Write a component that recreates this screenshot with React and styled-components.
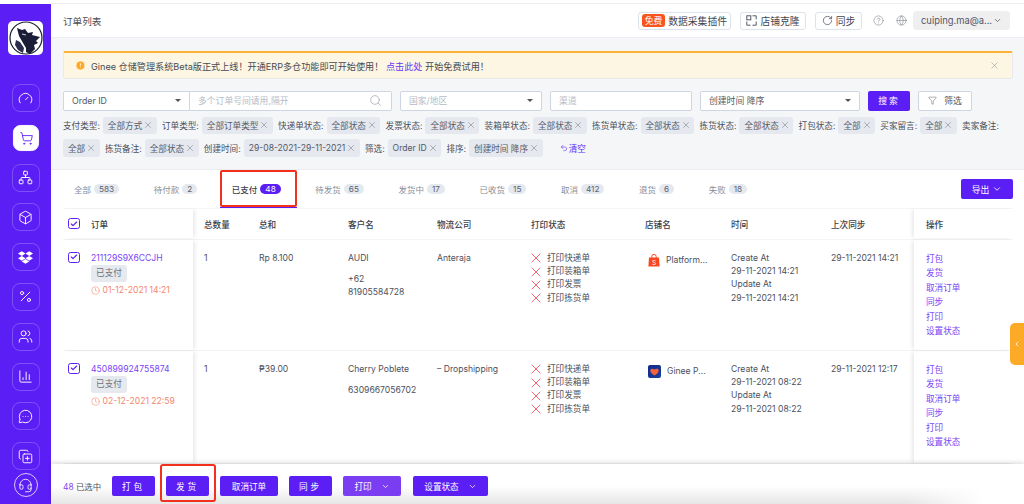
import React from "react";
import styled, { createGlobalStyle } from "styled-components";
import {
  Gauge, ShoppingCart, Network, Box, Percent, Users, ChartColumn, MessageCircleMore, CopyPlus, Headset,
  RotateCw, CircleHelp, Globe, ChevronDown, ChevronLeft, X, Search, Filter, Check, Clock, Undo2, CircleAlert,
} from "lucide-react";
import { FaDropbox } from "react-icons/fa";

const PURPLE = "#5b1ef5";
const LINK = "#7b45f6";
const TEXT = "#4b505c";

const Global = createGlobalStyle`
  html, body { margin: 0; padding: 0; background: #fff; }
  body { font-family: Inter, "Noto Sans CJK SC", "Liberation Sans", sans-serif; font-size: 8.6px; color: ${TEXT}; }
  * { box-sizing: border-box; }
`;

const Page = styled.div`
  width: 1024px; height: 504px; overflow: hidden; display: flex; padding-top: 4px; position: relative;
`;
const Sidebar = styled.aside`
  width: 51px; flex: none; background: ${PURPLE}; display: flex; flex-direction: column; align-items: center; padding-top: 17px;
`;
const Logo = styled.div`
  width: 35px; height: 34px; background: #fff; border-radius: 5px; display: flex; align-items: center; justify-content: center; margin-bottom: 29px;
`;
const NavList = styled.div`
  display: flex; flex-direction: column; gap: 11.8px; align-items: center;
`;
const NavItem = styled.div`
  width: 28px; height: 28px; border-radius: 8px;
  display: flex; align-items: center; justify-content: center;
  border: 1px solid ${(p) => (p.$active ? "#fff" : "rgba(255,255,255,.22)")};
  background: ${(p) => (p.$active ? "#fff" : "transparent")};
  color: ${(p) => (p.$active ? PURPLE : "#fff")};
  ${(p) => p.$active && "transform: scale(.93);"}
`;
const Support = styled.div`
  width: 24px; height: 24px; border-radius: 50%; border: 1px solid rgba(255,255,255,.75); color: #fff;
  display: flex; align-items: center; justify-content: center; margin-top: 3px;
`;
const Main = styled.main`
  flex: 1; min-width: 0; display: flex; flex-direction: column; border-top: 1px solid #ededed; margin-top: -1px;
`;
const Header = styled.header`
  height: 34px; flex: none; display: flex; align-items: center; padding: 0 14px 0 12px; border-bottom: 1px solid #eceef2; background: #fff;
`;
const Title = styled.h1`
  margin: 0; margin-right: auto; font-size: 9.6px; font-weight: 400; color: #4a4f59;
`;
const HeaderBtn = styled.button`
  width: ${(p) => p.$w}px; height: 18px; padding: 0; margin-left: ${(p) => p.$ml ?? 9}px;
  background: #fff; border: 1px solid #dde3ec; border-radius: 3px; color: #3f4450;
  font: inherit; font-size: 9.8px; display: flex; align-items: center; justify-content: center; gap: 3px; white-space: nowrap;
`;
const FreeBadge = styled.span`
  background: #f9531e; color: #fff; font-size: 8.8px; height: 13px; line-height: 13px; padding: 0 2.800px; border-radius: 3px;
`;
const HeaderIcon = styled.span`
  display: flex; color: #777c86; margin-left: ${(p) => p.$ml}px;
`;
const UserPill = styled.div`
  width: 97px; height: 19px; margin-left: 6px; border-radius: 4px; background: #efefef; color: #50566b; font-size: 9.4px;
  display: flex; align-items: center; padding-left: 8px; gap: 1px; white-space: nowrap;
`;
const FilterArea = styled.section`
  height: 132px; flex: none; background: #f5f6f8; padding: 13px 11px 0 12px; border-bottom: 1px solid #eaecef;
`;
const Alert = styled.div`
  height: 28px; background: #fdf6e3; border-top: 2px solid #fdb135; border-bottom: 1px solid #e8e9ea; border-left: 1px solid #eceae4; border-right: 1px solid #e8e9ea;
  border-radius: 2px; display: flex; align-items: center; padding: 0 12px 0 11px; font-size: 9.15px; color: #474a52; gap: 5px;
`;
const AlertLink = styled.a`color: #6a36f5;`;
const AlertClose = styled.span`margin-left: auto; display: flex; color: #8b8f97;`;
const SearchRow = styled.div`
  display: flex; height: 20px; margin-top: 11.5px;
`;
const Field = styled.div`
  width: ${(p) => p.$w}px; margin-right: ${(p) => p.$mr ?? 8}px; height: 20px; background: #fff;
  border: 1px solid #cfd6e3; border-radius: ${(p) => p.$radius || "2px"}; ${(p) => p.$noLeft && "border-left: 0;"}
  display: flex; align-items: center; justify-content: space-between; padding: 0 ${(p) => p.$pr ?? 8}px 0 8px;
  font-size: 8.8px; color: ${(p) => (p.$ph ? "#b6bbc6" : "#555a65")};
`;
const Caret = styled.span`
  width: 0; height: 0; border-left: 3px solid transparent; border-right: 3px solid transparent; border-top: 3px solid #555;
`;
const SearchBtn = styled.button`
  width: 42px; height: 20px; border: 0; background: ${PURPLE}; color: #fff; border-radius: 2px; font: inherit; font-size: 8.8px; letter-spacing: 2px; margin-right: 8px;
`;
const FilterBtn = styled.button`
  width: 54px; height: 20px; border: 1px solid #cfd6e3; background: #fff; border-radius: 2px; font: inherit; font-size: 8.8px; color: #555a65;
  display: flex; align-items: center; justify-content: center; gap: 7px;
`;
const TagRows = styled.div`
  display: flex; flex-wrap: wrap; align-items: center; column-gap: 3px; row-gap: 5px; margin-top: 6px;
`;
const TagLabel = styled.span`color: #4a4f5a; white-space: nowrap;`;
const Tag = styled.span`
  height: 17.5px; padding: 0 3.500px 0 5px; margin-right: 2.200px; background: #e5e8ef; border-radius: 3px; display: inline-flex; align-items: center; gap: 1px; white-space: nowrap; color: #555a66;
`;
const Clear = styled.a`
  color: ${PURPLE}; margin-left: 12px; display: inline-flex; align-items: center; gap: 1px;
`;
const Tabs = styled.nav`
  height: 38px; flex: none; background: #fff; display: flex; gap: 34.6px; padding: 0 11px 0 23px; align-items: stretch;
  margin: 0; position: relative; font-size: 8.5px;
`;
const TabWrap = styled.div`
  display: flex; align-items: center; gap: 3px; position: relative; color: ${(p) => (p.$active ? "#3c4048" : "#898e98")}; white-space: nowrap;
  font-weight: ${(p) => (p.$active ? 500 : 400)};
`;
const Count = styled.span`
  height: 10px; padding: 0 5px; border-radius: 5px; font-size: 8.2px; line-height: 10px; text-align: center; font-weight: 400;
  background: ${(p) => (p.$active ? PURPLE : "#e4e8ef")}; color: ${(p) => (p.$active ? "#fff" : "#5c6270")};
`;
const Annotation = styled.div`
  position: absolute; border: 2px solid #f3301e; border-radius: 2px; pointer-events: none; z-index: 5;
`;
const TabMark = styled(Annotation)`
  left: -12px; right: -16px; top: 0; bottom: 1px;
`;
const Underline = styled.div`
  position: absolute; left: -12px; right: -16px; bottom: 0; height: 1px; background: ${PURPLE};
`;
const ExportBtn = styled.button`
  margin: 9px 0 9px auto; width: 52px; height: 20px; border: 0; border-radius: 2px; background: ${PURPLE}; color: #fff; font: inherit; font-size: 8.8px;
  display: flex; align-items: center; justify-content: center; gap: 3px;
`;
const TableWrap = styled.div`
  flex: 1; min-height: 0; background: #fff; padding: 0 11px 0 12px; overflow: hidden;
`;
const Row = styled.div`
  display: grid; grid-template-columns: 130px 55px 89px 89px 94px 114px 86px 100px 94px 99px;
  height: ${(p) => p.$h}px; border-bottom: 1px solid #f3f4f6; border-top: ${(p) => (p.$head ? "1px solid #f6f6f6" : 0)};
  ${(p) => p.$head && "padding-bottom: 1px;"}
`;
const Cell = styled.div`
  padding: ${(p) => (p.$head ? "0" : "11.5px")} 4px 0 11px; min-width: 0;
  ${(p) => p.$head && "display: flex; align-items: center; font-weight: 500; color: #3c4048;"}
`;
const OrderCell = styled(Cell)`
  display: flex; gap: 11.5px; padding-left: 5px; position: relative; z-index: 1; box-shadow: 3px 0 4px -1px rgba(0,0,0,.09);
  ${(p) => p.$head && "align-items: center;"}
`;
const ActionCell = styled(Cell)`
  padding-left: 12px; position: relative; z-index: 1; box-shadow: -3px 0 4px -1px rgba(0,0,0,.09);
`;
const CheckBox = styled.span`
  width: 11.5px; height: 11.5px; flex: none; border: 1px solid ${PURPLE}; border-radius: 2.5px; display: flex; align-items: center; justify-content: center; color: ${PURPLE};
`;
const OrderInfo = styled.div`display: flex; flex-direction: column; align-items: flex-start;`;
const OrderLink = styled.a`color: ${LINK}; line-height: 13px;`;
const Status = styled.span`
  width: 36px; height: 17px; line-height: 17px; text-align: center; background: #e6e9ee; border-radius: 3px; color: #6c717c;
`;
const Due = styled.span`
  display: flex; align-items: center; gap: 2.500px; color: #f4876c; margin-top: 2px; line-height: 13px;
`;
const Line = styled.div`line-height: 13.4px;`;
const Para = styled.div`line-height: 13.4px; margin-bottom: 8px;`;
const PrintItem = styled.div`
  line-height: 13.4px; height: 13.4px; display: flex; align-items: center; gap: 3px; color: #4a4f5a;
`;
const RedX = styled(X)`color: #f2404f; flex: none; margin-left: -3px;`;
const Store = styled.div`
  display: flex; align-items: center; gap: 6px; padding-left: 3px; white-space: nowrap; line-height: 13.4px; margin-top: 2px;
`;
const Action = styled.a`display: block; color: ${LINK}; line-height: 14.6px; `;
const Footer = styled.footer`
  height: 40px; flex: none; display: flex; align-items: center; gap: 11px; padding: 4px 0 0 12px; position: relative; z-index: 3;
  background: linear-gradient(to right, rgba(255,255,255,0) 88%, #fff 96%), linear-gradient(to bottom, #fff 55%, #e6e6e6 100%);
  box-shadow: 0 -2px 4px rgba(0,0,0,.12);
`;
const Selected = styled.span`white-space: nowrap; color: #4a4f5a; font-size: 8.4px; width: 38px; flex: none;`;
const SelectedNum = styled.span`color: ${LINK};`;
const ActionBtn = styled.button`
  width: ${(p) => p.$w}px; height: 20px; padding: 0; border: 0; border-radius: 2px; font: inherit; font-size: 8.6px; color: #fff;
  background: ${(p) => (p.$soft ? "#7b3df2" : PURPLE)}; letter-spacing: ${(p) => (p.$wide ? "3px" : 0)};
  margin-left: ${(p) => p.$ml || 0}px;
  display: flex; align-items: center; justify-content: center; gap: 9px; position: relative; flex: none;
`;
const ButtonMark = styled(Annotation)`
  left: -6px; right: -7px; top: -12px; bottom: -6px; border-radius: 3px;
`;
const SideTab = styled.div`
  position: absolute; right: 0; top: 323px; width: 14px; height: 42px; background: #fdaa26; border-radius: 5px 0 0 5px; color: #fff; display: flex; align-items: center; justify-content: center; z-index: 2;
`;

const WolfLogo = () => (
  <svg width="34" height="34" viewBox="0 0 34 34">
    <circle cx="17" cy="17" r="16" fill="#fff" stroke="#1b1d33" strokeWidth="1.2" />
    <path d="M8 7l5 2 3-1 3 4 5-1-1 3 8 2-4 4 2 2-4 2 1 4-5 5-4-2v-4l-3-5-4-7z" fill="#1a1d38" />
    <path d="M7 19l4 2 4 6-1 5-5-3-3-5z" fill="#2a2d4c" />
    <path d="M13 13l4 1" stroke="#fff" strokeWidth=".8" />
  </svg>
);
const CloneIcon = () => (
  <svg width="11" height="11" viewBox="0 0 11 11" fill="none" stroke="#555a65" strokeWidth="1">
    <rect x=".8" y=".8" width="4" height="4" />
    <path d="M6.500.8h3.700v3.500M10.200 6.500v3.700H6.500M.8 6.500v3.700h3.700" />
  </svg>
);
const ShopeeIcon = () => (
  <svg width="12" height="13" viewBox="0 0 12 13">
    <path d="M1 3.500h10l.6 9H.4z" fill="#f9481e" />
    <path d="M3.800 4V2.600a2.200 2.200 0 0 1 4.400 0V4" fill="none" stroke="#f9481e" strokeWidth="1" />
    <text x="6" y="10.600" fontSize="6.500" fill="#fff" textAnchor="middle" fontFamily="Inter">S</text>
  </svg>
);
const LazadaIcon = () => (
  <svg width="13" height="13" viewBox="0 0 13 13">
    <defs>
      <linearGradient id="laz" x1="0" y1="0" x2="1" y2="1">
        <stop offset="0" stopColor="#0f2a8a" />
        <stop offset="1" stopColor="#1c3f9e" />
      </linearGradient>
    </defs>
    <rect width="13" height="13" rx="2" fill="url(#laz)" />
    <path d="M6.500 10.500C3 8.600 2 6.800 2.400 5.100c.4-1.500 2.400-1.800 4.100-.6 1.700-1.200 3.700-.9 4.100.6.4 1.700-.6 3.500-4.100 5.400z" fill="#f5613c" />
  </svg>
);

const tabs = [
  ["全部", "583"], ["待付款", "2"], ["已支付", "48", true], ["待发货", "65"], ["发货中", "17"],
  ["已收货", "15"], ["取消", "412"], ["退货", "6"], ["失败", "18"],
];
const tags = [
  ["支付类型:", "全部方式"], ["订单类型:", "全部订单类型"], ["快递单状态:", "全部状态"], ["发票状态:", "全部状态"],
  ["装箱单状态:", "全部状态"], ["拣货单状态:", "全部状态"], ["拣货状态:", "全部状态"], ["打包状态:", "全部"],
  ["买家留言:", "全部"], ["卖家备注:", "全部"], ["拣货备注:", "全部状态"], ["创建时间:", "29-08-2021-29-11-2021"],
  ["筛选:", "Order ID"], ["排序:", "创建时间 降序"],
];
const heads = ["总数量", "总和", "客户名", "物流公司", "打印状态", "店铺名", "时间", "上次同步"];
const prints = ["打印快递单", "打印装箱单", "打印发票", "打印拣货单"];
const actions = ["打包", "发货", "取消订单", "同步", "打印", "设置状态"];
const orders = [
  { id: "211129S9X6CCJH", due: "01-12-2021 14:21", total: "Rp 8.100", name: "AUDI", phone: ["+62", "81905584728"], ship: "Anteraja",
    store: "Platform...", icon: <ShopeeIcon />, created: "29-11-2021 14:21", updated: "29-11-2021 14:21", sync: "29-11-2021 14:21", h: 111 },
  { id: "450899924755874", due: "02-12-2021 22:59", total: "₱39.00", name: "Cherry Poblete", phone: ["6309667056702"], ship: "– Dropshipping",
    store: "Ginee P...", icon: <LazadaIcon />, created: "29-11-2021 08:22", updated: "29-11-2021 08:22", sync: "29-11-2021 12:17", h: 113 },
];
const Tick = () => (
  <CheckBox><Check size={8} strokeWidth={3.5} /></CheckBox>
);

export default function App() {
  return (
    <>
      <Global />
      <Page>
        <Sidebar>
          <Logo><WolfLogo /></Logo>
          <NavList>
            <NavItem><Gauge size={15} strokeWidth={1.5} /></NavItem>
            <NavItem $active><ShoppingCart size={15} strokeWidth={1.5} /></NavItem>
            <NavItem><Network size={15} strokeWidth={1.5} /></NavItem>
            <NavItem><Box size={15} strokeWidth={1.5} /></NavItem>
            <NavItem><FaDropbox size={15} /></NavItem>
            <NavItem><Percent size={15} strokeWidth={1.5} /></NavItem>
            <NavItem><Users size={15} strokeWidth={1.5} /></NavItem>
            <NavItem><ChartColumn size={15} strokeWidth={1.5} /></NavItem>
            <NavItem><MessageCircleMore size={15} strokeWidth={1.5} /></NavItem>
            <NavItem><CopyPlus size={15} strokeWidth={1.5} /></NavItem>
          </NavList>
          <Support><Headset size={15} strokeWidth={1.3} /></Support>
        </Sidebar>
        <Main>
          <Header>
            <Title>订单列表</Title>
            <HeaderBtn $w={93}><FreeBadge>免费</FreeBadge>数据采集插件</HeaderBtn>
            <HeaderBtn $w={66}><CloneIcon />店铺克隆</HeaderBtn>
            <HeaderBtn $w={47}><RotateCw size={11} strokeWidth={1.5} />同步</HeaderBtn>
            <HeaderIcon $ml={11}><CircleHelp size={11} strokeWidth={1.2} /></HeaderIcon>
            <HeaderIcon $ml={12}><Globe size={11} strokeWidth={1.2} /></HeaderIcon>
            <UserPill>cuiping.ma@a...<ChevronDown size={9} /></UserPill>
          </Header>
          <FilterArea>
            <Alert>
              <CircleAlert size={11} fill="#fdaa26" color="#fff" strokeWidth={1.6} />
              <span>Ginee 仓储管理系统Beta版正式上线！开通ERP多仓功能即可开始使用！<AlertLink> 点击此处 </AlertLink> 开始免费试用！</span>
              <AlertClose><X size={11} strokeWidth={1.2} /></AlertClose>
            </Alert>
            <SearchRow>
              <Field $w={127} $mr={0} $radius="2px 0 0 2px">Order ID<Caret /></Field>
              <Field $w={202} $pr={9} $ph $noLeft $radius="0 2px 2px 0">多个订单号间请用,隔开<Search size={13} strokeWidth={1.3} color="#9aa0ac" /></Field>
              <Field $w={142} $ph>国家/地区<Caret /></Field>
              <Field $w={142} $ph>渠道</Field>
              <Field $w={160}>创建时间 降序<Caret /></Field>
              <SearchBtn>搜索</SearchBtn>
              <FilterBtn><Filter size={9} strokeWidth={1.3} />筛选</FilterBtn>
            </SearchRow>
            <TagRows>
              {tags.map(([label, value]) => (
                <React.Fragment key={label}>
                  <TagLabel>{label}</TagLabel>
                  <Tag>{value}<X size={10} strokeWidth={1} /></Tag>
                </React.Fragment>
              ))}
              <Clear><Undo2 size={8} strokeWidth={1.6} />清空</Clear>
            </TagRows>
          </FilterArea>
          <Tabs>
            {tabs.map(([label, n, active]) => (
              <TabWrap key={label} $active={active}>
                {label}<Count $active={active}>{n}</Count>
                {active && <Underline />}
                {active && <TabMark />}
              </TabWrap>
            ))}
            <ExportBtn>导出<ChevronDown size={10} /></ExportBtn>
          </Tabs>
          <TableWrap>
            <Row $h={32} $head>
              <OrderCell $head><Tick />订单</OrderCell>
              {heads.map((h) => <Cell $head key={h}>{h}</Cell>)}
              <ActionCell $head>操作</ActionCell>
            </Row>
            {orders.map((o) => (
              <Row $h={o.h} key={o.id}>
                <OrderCell>
                  <Tick />
                  <OrderInfo>
                    <OrderLink>{o.id}</OrderLink>
                    <Status>已支付</Status>
                    <Due><Clock size={9} strokeWidth={1.5} />{o.due}</Due>
                  </OrderInfo>
                </OrderCell>
                <Cell><Line>1</Line></Cell>
                <Cell><Line>{o.total}</Line></Cell>
                <Cell>
                  <Para>{o.name}</Para>
                  {o.phone.map((p) => <Line key={p}>{p}</Line>)}
                </Cell>
                <Cell><Line>{o.ship}</Line></Cell>
                <Cell>
                  {prints.map((p) => <PrintItem key={p}><RedX size={16} strokeWidth={1.2} />{p}</PrintItem>)}
                </Cell>
                <Cell><Store>{o.icon}{o.store}</Store></Cell>
                <Cell>
                  <Line>Create At</Line><Line>{o.created}</Line>
                  <Line>Update At</Line><Line>{o.updated}</Line>
                </Cell>
                <Cell><Line>{o.sync}</Line></Cell>
                <ActionCell>
                  {actions.map((a) => <Action key={a}>{a}</Action>)}
                </ActionCell>
              </Row>
            ))}
          </TableWrap>
          <Footer>
            <Selected><SelectedNum>48</SelectedNum> 已选中</Selected>
            <ActionBtn $w={43} $wide>打包</ActionBtn>
            <ActionBtn $w={43} $wide>发货<ButtonMark /></ActionBtn>
            <ActionBtn $w={58}>取消订单</ActionBtn>
            <ActionBtn $w={43} $wide>同步</ActionBtn>
            <ActionBtn $w={58} $soft>打印<ChevronDown size={9} /></ActionBtn>
            <ActionBtn $w={75} $ml={1}>设置状态<ChevronDown size={9} /></ActionBtn>
          </Footer>
        </Main>
        <SideTab><ChevronLeft size={8} strokeWidth={2.5} /></SideTab>
      </Page>
    </>
  );
}
